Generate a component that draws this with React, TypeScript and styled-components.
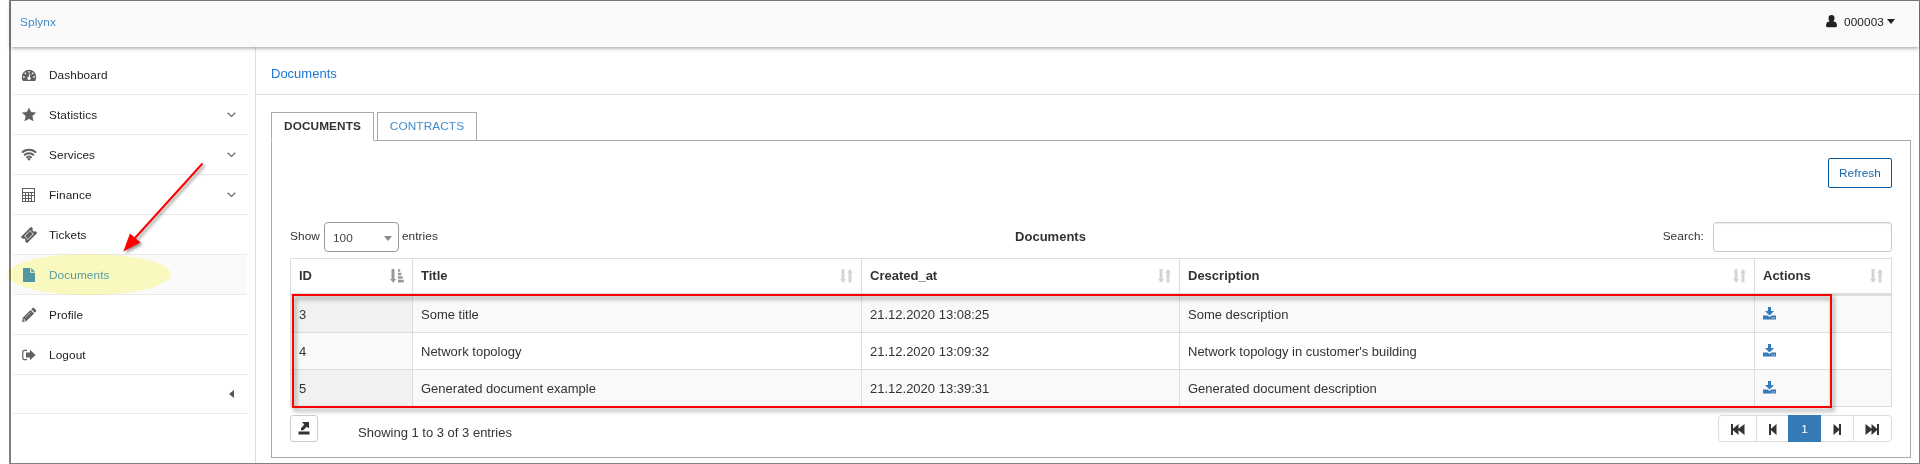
import React from 'react';
import styled, { createGlobalStyle } from 'styled-components';

const GlobalStyle = createGlobalStyle`
  *, *::before, *::after { box-sizing: border-box; }
  body {
    margin: 0;
    background: #fff;
    color: #333;
    font: 11.8px/16px "Liberation Sans", Arial, sans-serif;
    letter-spacing: 0.1px;
  }
`;

const Frame = styled.div`
  position: relative;
  display: flex;
  flex-direction: column;
  height: 464px;
  margin-left: 9px;
  border: 1px solid #808080;
  border-left-width: 2px;
  background: #fff;
`;

const Header = styled.header`
  position: relative;
  z-index: 1;
  display: flex;
  flex: none;
  justify-content: space-between;
  height: 46px;
  padding: 13px 24px 0 9px;
  background: #fafafa;
  box-shadow: 0 1px 4px rgba(0, 0, 0, 0.4);
`;

const Brand = styled.a`
  color: #428bca;
`;

const UserMenu = styled.div`
  display: flex;
  align-items: flex-start;
  color: #222;
  svg:first-child { margin-right: 7px; }
  svg:last-child { margin: 5px 0 0 3px; }
`;

const Body = styled.div`
  display: flex;
  flex: 1;
`;

const Sidebar = styled.nav`
  width: 245px;
  padding: 8px 8px 0 2px;
  border-right: 1px solid #ddd;
`;

const NavItem = styled.a<{ $active?: boolean }>`
  display: flex;
  align-items: center;
  height: 40px;
  padding: 0 11px 0 8px;
  border-bottom: 1px solid #e9e9e9;
  background: ${p => (p.$active ? '#fafafa' : 'transparent')};
  color: ${p => (p.$active ? '#569fd8' : '#222')};
  > svg:first-child {
    margin-top: 1px;
    color: ${p => (p.$active ? '#5097d8' : '#606060')};
  }
`;

const NavLabel = styled.span`
  flex: 1;
  margin-left: 12px;
  padding-top: 1px;
`;

const Collapse = styled.div`
  display: flex;
  align-items: center;
  justify-content: flex-end;
  height: 39px;
  padding-right: 13px;
  border-bottom: 1px solid #e9e9e9;
`;

const Main = styled.main`
  flex: 1;
`;

const Breadcrumb = styled.div`
  height: 48px;
  padding: 19px 0 0 15px;
  border-bottom: 1px solid #ddd;
  color: #1976d2;
  font-size: 13px;
  letter-spacing: 0;
`;

const Tabs = styled.div`
  display: flex;
  gap: 3px;
  margin: 17px 0 0 15px;
`;

const Tab = styled.a<{ $active?: boolean; $width: number }>`
  position: relative;
  z-index: 1;
  width: ${p => p.$width}px;
  height: 29px;
  padding-top: 5px;
  margin-bottom: -1px;
  border: 1px solid #aaa;
  border-bottom-color: ${p => (p.$active ? '#fff' : '#aaa')};
  text-align: center;
  color: ${p => (p.$active ? '#333' : '#428bca')};
  font-weight: ${p => (p.$active ? 700 : 400)};
`;

const Panel = styled.section`
  height: 318px;
  margin: 0 8px 0 15px;
  padding: 17px 18px 0;
  border: 1px solid #aaa;
`;

const Actions = styled.div`
  display: flex;
  justify-content: flex-end;
`;

const RefreshButton = styled.button`
  width: 64px;
  height: 30px;
  padding: 0;
  border: 1px solid #00579b;
  border-radius: 2px;
  background: #fff;
  color: #1565ab;
  font: inherit;
  letter-spacing: inherit;
`;

const Toolbar = styled.div`
  display: grid;
  grid-template-columns: 148px 1fr 229px;
  height: 30px;
  margin-top: 34px;
`;

const ToolGroup = styled.div<{ $end?: boolean }>`
  display: flex;
  justify-content: ${p => (p.$end ? 'flex-end' : 'flex-start')};
  line-height: 29px;
`;

const Select = styled.div`
  display: flex;
  justify-content: space-between;
  align-items: center;
  width: 75px;
  height: 30px;
  margin: 0 3px 0 4px;
  padding: 2px 6px 0 8px;
  border: 1px solid #999;
  border-radius: 4px;
  color: #444;
`;

const TableTitle = styled.strong`
  font-size: 13px;
  letter-spacing: 0;
  line-height: 29px;
  text-align: center;
`;

const SearchInput = styled.input`
  width: 179px;
  height: 30px;
  margin-left: 9px;
  border: 1px solid #ccc;
  border-radius: 3px;
  box-shadow: inset 0 1px 1px rgba(0, 0, 0, 0.075);
`;

const Table = styled.table`
  width: 1602px;
  margin-top: 6px;
  border: 1px solid #ddd;
  border-width: 1px 1px 0 0;
  border-spacing: 0;
  table-layout: fixed;
  font-size: 13px;
  letter-spacing: 0;
`;

const Th = styled.th<{ $width?: number }>`
  width: ${p => (p.$width ? `${p.$width}px` : 'auto')};
  height: 37px;
  padding: 0 8px;
  border: 0 solid #ddd;
  border-width: 0 0 3px 1px;
  text-align: left;
`;

const ThInner = styled.div`
  display: flex;
  align-items: center;
  justify-content: space-between;
`;

const Row = styled.tr`
  &:nth-child(odd) { background: #f9f9f9; }
  td:first-child { background: #fafafa; }
  &:nth-child(odd) td:first-child { background: #f1f1f1; }
`;

const Td = styled.td`
  height: 37px;
  padding: 2px 8px 0;
  border: 0 solid #ddd;
  border-width: 0 0 1px 1px;
  > svg { display: block; margin-top: -3px; }
`;

const Footer = styled.div`
  display: flex;
  margin-top: 8px;
`;

const ExportButton = styled.button`
  display: flex;
  align-items: center;
  justify-content: center;
  width: 28px;
  height: 27px;
  padding: 0;
  border: 1px solid #ccc;
  border-radius: 3px;
  background: #fff;
`;

const Summary = styled.div`
  flex: 1;
  margin-left: 40px;
  padding-top: 10px;
  font-size: 13px;
  letter-spacing: 0;
`;

const Pager = styled.div`
  display: flex;
  height: 27px;
  border: 1px solid #ddd;
  border-radius: 4px;
`;

const PageLink = styled.a<{ $width: number; $current?: boolean; $line?: boolean }>`
  display: flex;
  align-items: center;
  justify-content: center;
  width: ${p => p.$width}px;
  margin: ${p => (p.$current ? '-1px 0' : '0')};
  padding-top: 1px;
  border-left: ${p => (p.$line ? '1px solid #ddd' : 'none')};
  background: ${p => (p.$current ? '#337ab7' : 'transparent')};
  color: ${p => (p.$current ? '#fff' : '#333')};
  &:last-child { padding-right: 2px; }
`;

const Highlight = styled.div`
  position: absolute;
  z-index: 2;
  left: -4px;
  top: 253px;
  width: 164px;
  height: 41px;
  border-radius: 50%;
  background: #fefdc2;
  mix-blend-mode: multiply;
`;

const Outline = styled.div`
  position: absolute;
  z-index: 2;
  left: 281px;
  top: 293px;
  width: 1540px;
  height: 114px;
  border: 2px solid #f00;
  filter: drop-shadow(2px 3px 2px rgba(0, 0, 0, 0.45));
`;

const Arrow = styled.svg`
  position: absolute;
  z-index: 3;
  left: 100px;
  top: 150px;
  filter: drop-shadow(2px 2px 1.5px rgba(0, 0, 0, 0.4));
`;

const Icon = ({ children }: { children: React.ReactNode }) => (
  <svg width="16" height="16" viewBox="0 0 16 16" fill="currentColor">{children}</svg>
);

const DashboardIcon = () => (
  <Icon>
    <path fillRule="evenodd" d="M8 2.700A7.200 7.200 0 0 0 .8 9.900c0 1.500.4 2.900 1.100 4.100h12.200c.7-1.200 1.100-2.600 1.100-4.100A7.200 7.200 0 0 0 8 2.700ZM8 3.900a.9.900 0 1 1 0 1.800.9.900 0 0 1 0-1.800ZM4.400 5.400a.9.900 0 1 1 0 1.800.9.900 0 0 1 0-1.800ZM11.600 5.400a.9.900 0 1 1 0 1.800.9.900 0 0 1 0-1.800ZM2.900 9a.9.900 0 1 1 0 1.800.9.900 0 0 1 0-1.800ZM13.100 9a.9.900 0 1 1 0 1.800.9.900 0 0 1 0-1.800ZM8.600 6.800l.9.200-.7 3a1.600 1.600 0 1 1-1-.2Z" />
  </Icon>
);
const StarIcon = () => (
  <Icon><path d="m8 .9 2 4.200 4.800.6-3.500 3.300 1 4.900L8 11.700l-4.300 2.200 1-4.900L1.200 5.700 6 5.100Z" stroke="currentColor" strokeWidth=".3" /></Icon>
);
const WifiIcon = () => (
  <Icon>
    <g fill="none" stroke="currentColor" strokeWidth="1.900">
      <path d="M.9 5.600a10.200 10.200 0 0 1 14.200 0M3.100 8.200a7.100 7.100 0 0 1 9.800 0M5.300 10.700a4 4 0 0 1 5.400 0" />
    </g>
    <path d="M6.200 11.900a2.500 2.500 0 0 1 3.600 0L8 13.700Z" />
  </Icon>
);
const CalculatorIcon = () => (
  <Icon>
    <path fillRule="evenodd" d="M1 1h13v14H1ZM2 2v3h11V2ZM2 6v2h2V6ZM5 6v2h2V6ZM8 6v2h2V6ZM11 6v2h2V6ZM2 9v2h2V9ZM5 9v2h2V9ZM8 9v2h2V9ZM2 12v2h2v-2ZM5 12v2h2v-2ZM8 12v2h2v-2ZM11 9v5h2V9Z" />
  </Icon>
);
const TicketIcon = () => (
  <Icon>
    <g transform="rotate(-45 8 8)">
      <path fillRule="evenodd" d="M.8 3.600h14.400v2.900a1.500 1.500 0 0 0 0 3V12.400H.8V9.500a1.500 1.500 0 0 0 0-3ZM3.900 5.400v5.200h8.200V5.400ZM4.500 6h7v4h-7Z" />
    </g>
  </Icon>
);
const FileIcon = () => (
  <Icon><path d="M2 1h7.200v4.800H14V15H2ZM10.200 1 14 4.800h-3.800Z" /></Icon>
);
const PencilIcon = () => (
  <Icon>
    <path fillRule="evenodd" d="m9.600 2.900 3.500 3.500-7.900 7.900-4.100.7.700-4.200ZM10.300 2.200l1-1c.6-.6 1.300-.6 1.900 0l1.600 1.600c.6.6.6 1.300 0 1.900l-1 1ZM2.900 11.700l-.3 1.300.7.700 1.300-.3ZM9.500 5.300 4 10.800l.3.300 5.500-5.500Z" />
  </Icon>
);
const LogoutIcon = () => (
  <Icon>
    <path d="M6 3.300H3.500a1.700 1.700 0 0 0-1.700 1.700v6a1.700 1.700 0 0 0 1.700 1.700H6" fill="none" stroke="currentColor" strokeWidth="1.200" />
    <path d="M5 5.500h4V2.700L14.500 8 9 13.300v-2.800H5Z" />
  </Icon>
);
const ChevronIcon = () => (
  <svg width="9" height="6" viewBox="0 0 9 6"><path d="m.7.8 3.800 3.600L8.300.8" fill="none" stroke="#666" strokeWidth="1.200" /></svg>
);
const UserIcon = () => (
  <svg width="11" height="14" viewBox="0 0 11 14" fill="currentColor">
    <path d="M5.500 1c2 0 3 1.200 3 3 0 1.300-.5 2.600-1.200 3.400 2.500 0 3.700 1.500 3.700 4.200 0 1-.6 1.700-1.600 1.700H1.600C.6 13.300 0 12.600 0 11.600c0-2.700 1.200-4.200 3.700-4.200C3 6.600 2.500 5.300 2.500 4c0-1.800 1-3 3-3Z" />
  </svg>
);
const DownTriangle = ({ w = 8, h = 5, fill = '#222' }) => (
  <svg width={w} height={h} viewBox="0 0 8 4" preserveAspectRatio="none"><path d="M0 0h8L4 4Z" fill={fill} /></svg>
);
const SortIcon = () => (
  <svg width="13" height="14" viewBox="0 0 13 14" fill="#d5d5d5">
    <path d="M1.500 0h3v10h1.700l-3.100 3.700L0 10h1.500ZM8.500 13.500h3V3.700H13L10 0 7 3.700h1.500Z" />
  </svg>
);
const SortedIcon = () => (
  <svg width="14" height="14" viewBox="0 0 14 14" fill="#999">
    <path d="M1.500 0h3v10h1.700l-3.100 3.700L0 10h1.500ZM8 .3h2.200v2.500H8ZM8 3.800h3.400v2.500H8ZM8 7.300h4.600v2.500H8ZM8 10.800h5.800v2.700H8Z" />
  </svg>
);
const DownloadIcon = () => (
  <svg width="14" height="13" viewBox="0 0 14 13" fill="#337ab7">
    <path d="M5 0h3v4h3L6.500 8.400 2 4h3Z" />
    <path fillRule="evenodd" d="M0 8.600h4.500l2 1.400 2-1.400H13v3.900H0ZM8.700 10.600v.9h1v-.9ZM10.800 10.600v.9h1v-.9Z" />
  </svg>
);
const ExportIcon = () => (
  <svg width="12" height="13" viewBox="0 0 12 13" fill="#333">
    <path d="M.5 9.500h11V12.500H.5ZM4 0h7v6.500L8.800 4.700 5.200 8.300H3V6.300L6.300 2.600Z" />
  </svg>
);

// One bar and one or two triangles; forward variants are mirrored.
const StepIcon = ({ double, forward }: { double?: boolean; forward?: boolean }) => {
  const w = double ? 14 : 8;
  return (
    <svg width={w} height="11" viewBox={`0 0 ${w} 11`} fill="currentColor">
      <g transform={forward ? `translate(${w} 0) scale(-1 1)` : undefined}>
        <path d={double ? 'M0 0h2v4.700L7.500 0v4.700L13.500 0v11L7.500 6.300V11L2 6.300V11H0Z' : 'M0 0h2v4.700L7.500 0v11L2 6.300V11H0Z'} />
      </g>
    </svg>
  );
};

const navItems = [
  { label: 'Dashboard', icon: <DashboardIcon /> },
  { label: 'Statistics', icon: <StarIcon />, expandable: true },
  { label: 'Services', icon: <WifiIcon />, expandable: true },
  { label: 'Finance', icon: <CalculatorIcon />, expandable: true },
  { label: 'Tickets', icon: <TicketIcon /> },
  { label: 'Documents', icon: <FileIcon />, active: true },
  { label: 'Profile', icon: <PencilIcon /> },
  { label: 'Logout', icon: <LogoutIcon /> },
];

const columns = [
  { label: 'ID', width: 122, sorted: true },
  { label: 'Title', width: 449 },
  { label: 'Created_at', width: 318 },
  { label: 'Description', width: 575 },
  { label: 'Actions' },
];

const documents = [
  { id: 3, title: 'Some title', created: '21.12.2020 13:08:25', description: 'Some description' },
  { id: 4, title: 'Network topology', created: '21.12.2020 13:09:32', description: "Network topology in customer's building" },
  { id: 5, title: 'Generated document example', created: '21.12.2020 13:39:31', description: 'Generated document description' },
];

export default function App() {
  return (
    <>
      <GlobalStyle />
      <Frame>
        <Header>
          <Brand>Splynx</Brand>
          <UserMenu><UserIcon />000003<DownTriangle /></UserMenu>
        </Header>
        <Body>
          <Sidebar>
            {navItems.map(item => (
              <NavItem key={item.label} $active={item.active}>
                {item.icon}
                <NavLabel>{item.label}</NavLabel>
                {item.expandable && <ChevronIcon />}
              </NavItem>
            ))}
            <Collapse>
              <svg width="5" height="8" viewBox="0 0 5 8"><path d="M5 0v8L0 4Z" fill="#555" /></svg>
            </Collapse>
          </Sidebar>
          <Main>
            <Breadcrumb>Documents</Breadcrumb>
            <Tabs>
              <Tab $active $width={103}>DOCUMENTS</Tab>
              <Tab $width={100}>CONTRACTS</Tab>
            </Tabs>
            <Panel>
              <Actions><RefreshButton>Refresh</RefreshButton></Actions>
              <Toolbar>
                <ToolGroup>
                  Show
                  <Select>100<DownTriangle fill="#888" /></Select>
                  entries
                </ToolGroup>
                <TableTitle>Documents</TableTitle>
                <ToolGroup $end>Search:<SearchInput /></ToolGroup>
              </Toolbar>
              <Table>
                <thead>
                  <tr>
                    {columns.map(c => (
                      <Th key={c.label} $width={c.width}>
                        <ThInner>{c.label}{c.sorted ? <SortedIcon /> : <SortIcon />}</ThInner>
                      </Th>
                    ))}
                  </tr>
                </thead>
                <tbody>
                  {documents.map(d => (
                    <Row key={d.id}>
                      <Td>{d.id}</Td>
                      <Td>{d.title}</Td>
                      <Td>{d.created}</Td>
                      <Td>{d.description}</Td>
                      <Td><DownloadIcon /></Td>
                    </Row>
                  ))}
                </tbody>
              </Table>
              <Footer>
                <ExportButton><ExportIcon /></ExportButton>
                <Summary>Showing 1 to 3 of 3 entries</Summary>
                <Pager>
                  <PageLink $width={37}><StepIcon double /></PageLink>
                  <PageLink $width={32} $line><StepIcon /></PageLink>
                  <PageLink $width={33} $current>1</PageLink>
                  <PageLink $width={32}><StepIcon forward /></PageLink>
                  <PageLink $width={38} $line><StepIcon double forward /></PageLink>
                </Pager>
              </Footer>
            </Panel>
          </Main>
        </Body>
        <Highlight />
        <Outline />
        <Arrow width="110" height="110" viewBox="0 0 110 110">
          <path d="M91.500 12.500 24 87" stroke="#f00" strokeWidth="2" />
          <path d="M12.300 100.500 19 82.500l10.500 9Z" fill="#f00" />
        </Arrow>
      </Frame>
    </>
  );
}
